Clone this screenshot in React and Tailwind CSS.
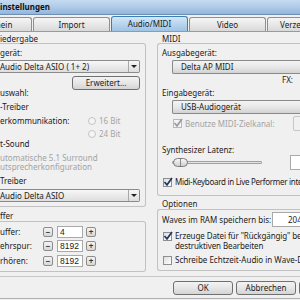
import React from "react";

const tabs = ["Allgemein", "Import", "Audio/MIDI", "Video", "Verzeichnisse"];

function Tab({ label, active }) {
  return (
    <div
      className={`w-[77px] shrink-0 flex items-center justify-center rounded-t-[3px] border border-b-0 ${
        active
          ? "h-[15px] border-[#3c7fb1] bg-gradient-to-b from-[#d4e7f6] to-[#9ec3e4]"
          : "h-[14px] border-[#8e8f8f] bg-gradient-to-b from-[#f6f6f6] to-[#d9d9d9]"
      }`}
    >
      {label}
    </div>
  );
}

function Arrow() {
  return <span className="w-0 h-0 border-x-[3px] border-x-transparent border-t-[3px] border-t-[#222]" />;
}

function Check({ checked, disabled }) {
  return (
    <span
      className={`relative block w-[9px] h-[9px] shrink-0 border ${
        disabled ? "border-[#b8b8b8] bg-[#f3f3f3]" : "border-[#8f8f8f] bg-gradient-to-br from-[#dedede] to-white"
      }`}
    >
      {checked && (
        <svg viewBox="0 0 10 10" className="absolute left-[-1px] top-[-2px] w-[10px] h-[10px]">
          <path d="M1.5 5 L4 7.8 L9 1" fill="none" stroke={disabled ? "#9c9c9c" : "#22385e"} strokeWidth="1.7" />
        </svg>
      )}
    </span>
  );
}

function Radio() {
  return <span className="block w-[8px] h-[8px] shrink-0 rounded-full border border-[#c4c4c4] bg-[#f5f5f5]" />;
}

function SpinBtn({ sign }) {
  return (
    <span className="w-[10px] h-[10px] shrink-0 flex items-center justify-center rounded-[2px] border border-[#8c8c8c] bg-gradient-to-b from-[#f4f4f4] to-[#d6d6d6] text-[8px] leading-none font-bold text-[#333]">
      {sign}
    </span>
  );
}

function SpinRow({ label, value }) {
  return (
    <div className="h-[12px] flex items-center">
      <span className="w-[43px]">{label}</span>
      <SpinBtn sign="−" />
      <span className="ml-[4px] w-[26px] h-[12px] flex items-center pl-[2px] border border-[#a9a9a9] bg-white font-['Liberation_Sans',sans-serif] text-[8.5px]">
        {value}
      </span>
      <span className="ml-[3px] block">
        <SpinBtn sign="+" />
      </span>
    </div>
  );
}

function Button({ children, w }) {
  return (
    <div
      className={`${w} h-[14px] shrink-0 flex items-center justify-center rounded-[3px] border border-[#707070] bg-gradient-to-b from-[#f3f3f3] via-[#e6e6e6] to-[#d4d4d4]`}
    >
      {children}
    </div>
  );
}

export default function App() {
  return (
    <div className="w-[300px] h-[300px] overflow-hidden bg-[#f0f0f0] text-[8px] leading-[10px] text-[#1b1b1b] font-['Noto_Sans',sans-serif] flex flex-col">
      {/* Title bar */}
      <div className="h-[15px] shrink-0 border-b border-[#6f8fb4] bg-gradient-to-b from-[#c6dbf0] via-[#afcbe8] to-[#93b6dc] font-bold text-[8px] leading-[14px] text-[#111]">
        instellungen
      </div>

      {/* Tabs */}
      <div className="h-[16px] shrink-0 flex items-end gap-[1px] ml-[-45px]">
        {tabs.map((t) => (
          <Tab key={t} label={t} active={t === "Audio/MIDI"} />
        ))}
      </div>

      {/* Tab page */}
      <div className="h-[246px] shrink-0 flex border-y border-t-[#9a9a9a] border-b-[#c8c8c8]">
        {/* Left column */}
        <div className="w-[146px] shrink-0 pt-[3px]">
          <div className="leading-[8px]">iedergabe</div>
          <div className="h-[164px] border border-l-0 border-[#c2c2c2] rounded-r-[3px] pt-[4px] pb-[4px] pr-[5px] flex flex-col">
            <div>gerät:</div>
            <div className="mt-[2px] h-[14px] flex items-center rounded-r-[2px] border border-l-0 border-[#8a8a8a] bg-gradient-to-b from-[#f7f7f7] to-[#dedede]">
              <span className="flex-1">Audio Delta ASIO ( 1+ 2)</span>
              <span className="w-[11px] h-full flex items-center justify-center border-l border-[#a8a8a8]">
                <Arrow />
              </span>
            </div>
            <div className="mt-[3px] self-end w-[68px]">
              <Button w="w-[68px] h-[12px]">Erweitert...</Button>
            </div>
            <div className="mt-[-2px]">uswahl:</div>
            <div className="mt-[4px]">-Treiber</div>
            <div className="mt-[4px] flex items-center">
              <span className="w-[88px]">erkommunikation:</span>
              <Radio />
              <span className="ml-[3px] text-[#a5a5a5]">16 Bit</span>
            </div>
            <div className="mt-[3px] flex items-center">
              <span className="w-[88px]" />
              <Radio />
              <span className="ml-[3px] text-[#a5a5a5]">24 Bit</span>
            </div>
            <div>t-Sound</div>
            <div className="mt-[4px] text-[#a3a3a3]">
              <div className="leading-[9px]">utomatische 5.1 Surround</div>
              <div className="leading-[9px]">utsprecherkonfiguration</div>
            </div>
            <div className="mt-[5px]">Treiber</div>
            <div className="mt-[3px] h-[14px] flex items-center rounded-r-[2px] border border-l-0 border-[#8a8a8a] bg-gradient-to-b from-[#f7f7f7] to-[#dedede]">
              <span className="flex-1">Audio Delta ASIO</span>
              <span className="w-[11px] h-full flex items-center justify-center border-l border-[#a8a8a8]">
                <Arrow />
              </span>
            </div>
          </div>
          <div className="mt-[4px]">ffer</div>
          <div className="h-[51px] border border-l-0 border-[#c2c2c2] rounded-r-[3px] pt-[4px] flex flex-col gap-[2px]">
            <SpinRow label="uffer:" value="4" />
            <SpinRow label="ehrspur:" value="8192" />
            <div className="mt-[1px]">
              <SpinRow label="rhören:" value="8192" />
            </div>
          </div>
        </div>

        {/* Right column */}
        <div className="ml-[11px] w-[200px] shrink-0 pt-[3px]">
          <div className="pl-[5px] leading-[8px]">MIDI</div>
          <div className="h-[153px] border border-r-0 border-[#c2c2c2] rounded-l-[3px] pt-[4px] pl-[4px] flex flex-col">
            <div>Ausgabegerät:</div>
            <div className="mt-[2px] ml-[10px] h-[14px] flex items-center pl-[8px] rounded-l-[2px] border border-r-0 border-[#8a8a8a] bg-gradient-to-b from-[#f4f4f4] via-[#e8e8e8] to-[#d3d3d3]">
              Delta AP MIDI
            </div>
            <div className="mt-[1px] ml-[120px]">FX:</div>
            <div className="mt-[3px]">Eingabegerät:</div>
            <div className="mt-[2px] ml-[10px] h-[14px] flex items-center pl-[8px] rounded-l-[2px] border border-r-0 border-[#8a8a8a] bg-gradient-to-b from-[#f4f4f4] via-[#e8e8e8] to-[#d3d3d3]">
              USB-Audiogerät
            </div>
            <div className="mt-[2px] h-[15px] flex items-center">
              <span className="ml-[11px] block">
                <Check checked disabled />
              </span>
              <span className="ml-[3px] w-[108px] text-[#a3a3a3]">Benutze MIDI-Zielkanal:</span>
              <span className="w-[20px] h-[15px] rounded-[2px] border border-[#c6c6c6] bg-[#f0f0f0]" />
            </div>
            <div className="mt-[14px]">Synthesizer Latenz:</div>
            <div className="h-[15px] flex items-center">
              <div className="relative ml-[10px] w-[90px] h-[3px] border border-[#a0a0a0] bg-[#e4e4e4] rounded-[1px]">
                <span className="absolute left-0 top-[-4px] w-[15px] h-[9px] rounded-full border border-[#7d7d7d] bg-gradient-to-b from-[#f7f7f7] to-[#cfcfcf] flex justify-center">
                  <span className="w-px h-full bg-[#8a8a8a]" />
                </span>
              </div>
              <span className="ml-[28px] w-[20px] h-[15px] border border-[#a9a9a9] bg-white" />
            </div>
            <div className="mt-[7px] flex items-center">
              <span className="ml-[1px] block">
                <Check checked />
              </span>
              <span className="ml-[3px] whitespace-nowrap tracking-[-0.3px]">Midi-Keyboard in Live Performer integrieren</span>
            </div>
          </div>
          <div className="mt-[3px] pl-[5px]">Optionen</div>
          <div className="h-[62px] border border-r-0 border-[#c2c2c2] rounded-l-[3px] pl-[4px] flex flex-col">
            <div className="mt-[2px] h-[15px] flex items-center">
              <span className="w-[110px]">Waves im RAM speichern bis:</span>
              <span className="w-[40px] h-[15px] flex items-center pl-[15px] border border-[#a9a9a9] bg-white">2048</span>
            </div>
            <div className="mt-[4px] flex">
              <span className="ml-[1px] mt-[1px] block">
                <Check checked />
              </span>
              <span className="ml-[3px] whitespace-nowrap tracking-[-0.1px]">
                <span className="block">Erzeuge Datei für "Rückgängig" beim</span>
                <span className="block">destruktiven Bearbeiten</span>
              </span>
            </div>
            <div className="mt-[4px] flex items-center">
              <span className="ml-[1px] block">
                <Check />
              </span>
              <span className="ml-[3px] whitespace-nowrap">Schreibe Echtzeit-Audio in Wave-Datei</span>
            </div>
          </div>
        </div>
      </div>

      {/* Bottom buttons */}
      <div className="h-[22px] shrink-0 flex items-center gap-[3px] pl-[173px] border-b border-[#b0b0b0]">
        <Button w="w-[60px]">OK</Button>
        <Button w="w-[60px]">Abbrechen</Button>
        <Button w="w-[60px]">Hilfe</Button>
      </div>
    </div>
  );
}
